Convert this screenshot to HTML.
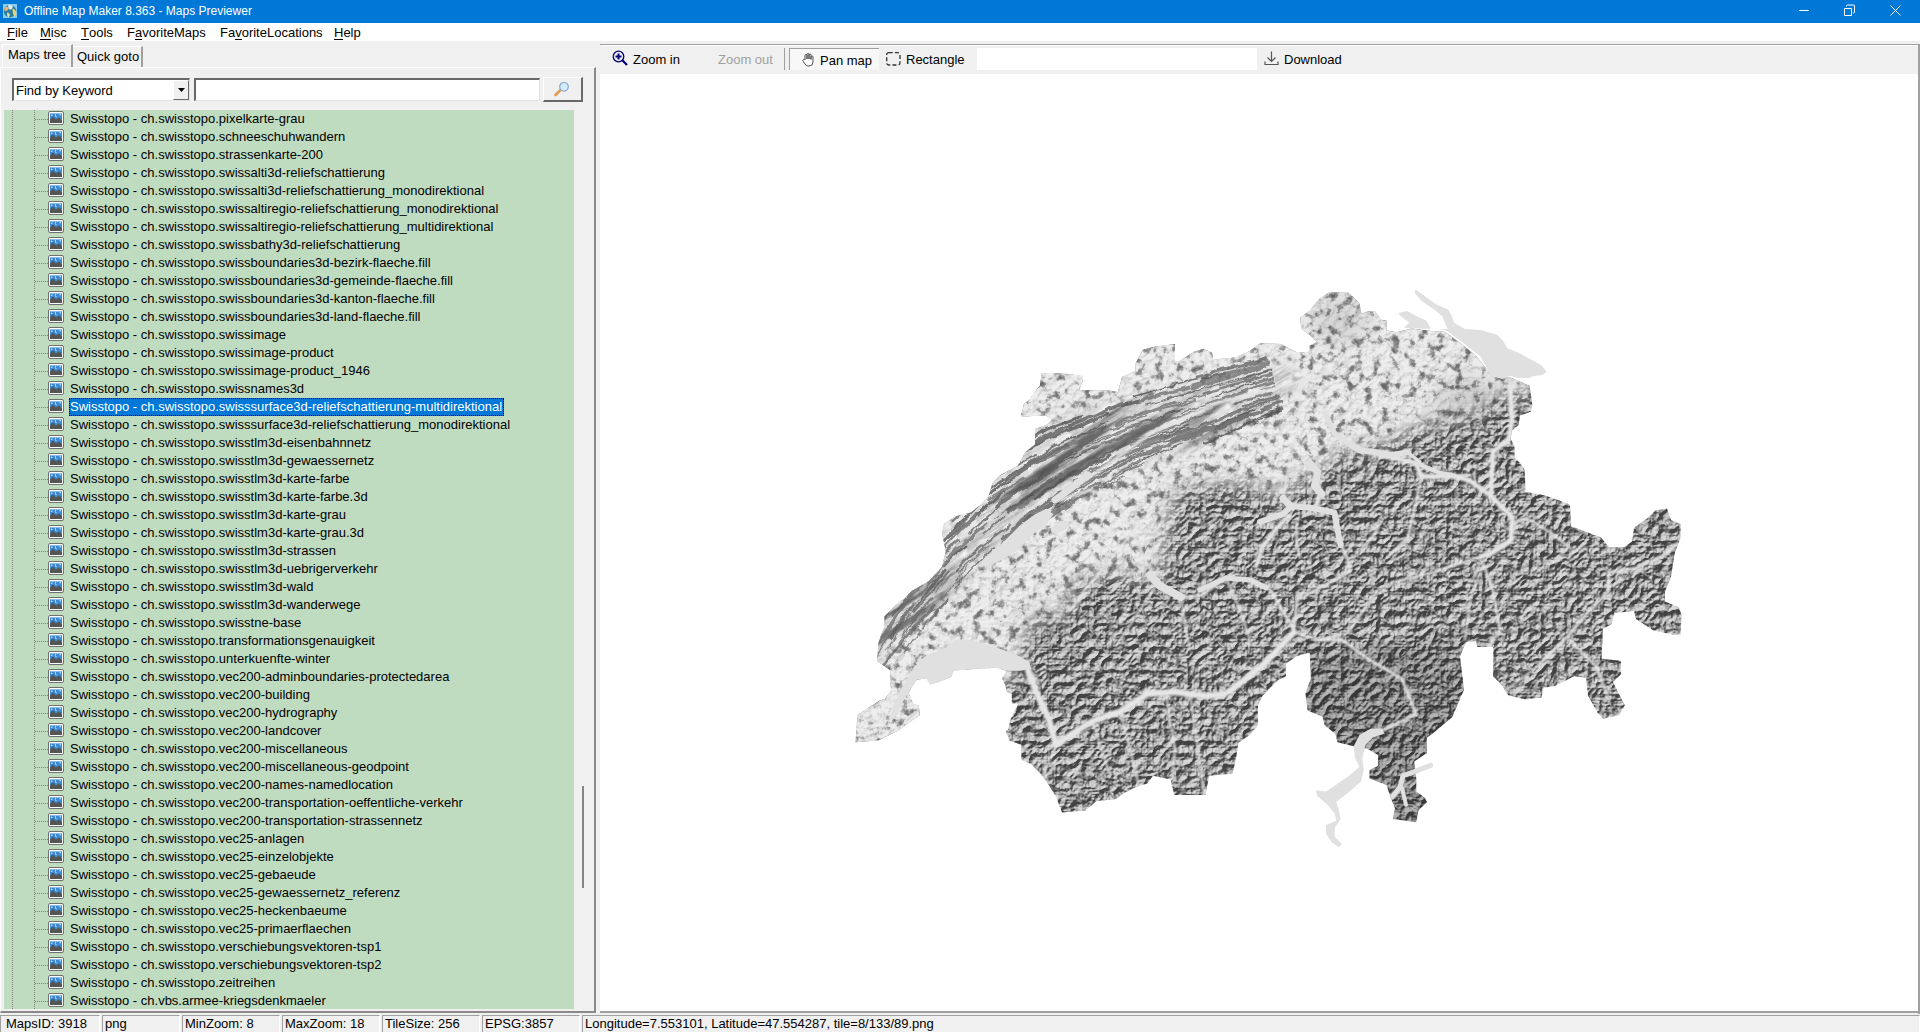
<!DOCTYPE html>
<html><head><meta charset="utf-8">
<style>
*{box-sizing:border-box}
html,body{margin:0;padding:0}
body{width:1920px;height:1032px;overflow:hidden;position:relative;background:#f0f0f0;font-family:"Liberation Sans",sans-serif;font-size:13px;color:#000}
.a{position:absolute}
#title{left:0;top:0;width:1920px;height:23px;background:#0078d7;color:#fff;font-size:12px;line-height:23px}
#title .t{left:24px;top:0}
#menu{left:0;top:23px;width:1920px;height:18px;background:#fff;line-height:20px}
#menu span{position:absolute;top:0}
u{text-decoration:none;border-bottom:1px solid #000;display:inline-block;line-height:12px}
.tab{position:absolute;line-height:18px}
#tree{left:4px;top:110px;width:570px;height:899px;background:#c0dcc0;overflow:hidden}
.r{position:absolute;left:0;width:570px;height:18px;line-height:18px;white-space:nowrap}
.hl{position:absolute;left:31px;top:9px;width:13px;height:1px;background:repeating-linear-gradient(90deg,#808080 0 1px,transparent 1px 2px)}
.r span{position:absolute;left:65px;top:0;padding:0 2px 0 1px}
.r.sel span{background:#0078d7;color:#fff;outline:1px dotted #000;outline-offset:-1px}
.ic{position:absolute;left:44px;top:1px;width:16px;height:14px}
#status span{position:absolute;top:0}
.sp{position:absolute;top:1015px;height:17px;border-top:1px solid #a0a0a0;border-left:1px solid #a0a0a0;border-right:1px solid #fff;line-height:15px;padding-left:5px;white-space:nowrap}
</style></head><body>
<div id="title" class="a">
  <svg class="a" style="left:3px;top:4px" width="14" height="14" viewBox="0 0 14 14"><rect width="14" height="14" fill="#86cdf2"/><circle cx="7" cy="7.2" r="6.2" fill="#2e7fa6"/><path d="M5 0.8Q8 0.5 10 2L9 5Q7 6 5.5 4.5Z" fill="#d8ecf0"/><path d="M1.2 4Q3 2 5 3L5.5 5.5Q4 7 1.5 7Z" fill="#e8b46c"/><path d="M9.5 4.5Q12.5 5 13.2 8L12.5 12Q11 13 10.5 11L9.8 8Z" fill="#f2d46a"/><path d="M4 8.5Q6.5 8.5 6.8 11L5.8 13.5Q4.5 13 4.2 11Z" fill="#e6e89a"/></svg>
  <span class="a t">Offline Map Maker 8.363 - Maps Previewer</span>
  <svg class="a" style="left:1799px;top:10px" width="11" height="2"><rect width="10" height="1" fill="#fff"/></svg>
  <svg class="a" style="left:1843px;top:4px" width="13" height="13" viewBox="0 0 13 13"><path d="M1.5 4.5h7v7h-7z" fill="none" stroke="#fff" stroke-width="1"/><path d="M3.5 2.5v-0.5a1 1 0 0 1 1-1h6a1 1 0 0 1 1 1v6a1 1 0 0 1-1 1h-0.5" fill="none" stroke="#fff" stroke-width="1"/></svg>
  <svg class="a" style="left:1889px;top:4px" width="13" height="13" viewBox="0 0 13 13"><path d="M1.5 1.5L11.5 11.5M11.5 1.5L1.5 11.5" stroke="#fff" stroke-width="1"/></svg>
</div>
<div id="menu" class="a">
  <span style="left:7px"><u>F</u>ile</span>
  <span style="left:40px"><u>M</u>isc</span>
  <span style="left:81px"><u>T</u>ools</span>
  <span style="left:127px">F<u>a</u>voriteMaps</span>
  <span style="left:220px">Fa<u>v</u>oriteLocations</span>
  <span style="left:334px"><u>H</u>elp</span>
</div>
<!-- left panel -->
<div class="a" style="left:0;top:42px;width:598px;height:973px;background:#f0f0f0"></div>
<!-- tabs -->
<div class="a" style="left:2px;top:44px;width:71px;height:24px;background:#f0f0f0;border-top:1px solid #fff;border-left:1px solid #fff;border-right:2px solid #a0a0a0"></div>
<div class="a tab" style="left:8px;top:46px">Maps tree</div>
<div class="a" style="left:73px;top:46px;width:70px;height:21px;border-top:1px solid #fff;border-right:2px solid #a0a0a0"></div>
<div class="a tab" style="left:77px;top:48px">Quick goto</div>
<!-- tab page border -->
<div class="a" style="left:0;top:67px;width:596px;height:946px;border-top:1px solid #fff;border-left:1px solid #fff;border-right:2px solid #8a8a8a;border-bottom:2px solid #8a8a8a"></div>
<div class="a" style="left:73px;top:67px;width:522px;height:1px;background:#fff"></div>
<!-- combo -->
<div class="a" style="left:12px;top:78px;width:178px;height:23px;background:#fff;border-top:2px solid #696969;border-left:2px solid #696969;border-bottom:1px solid #e3e3e3;border-right:1px solid #e3e3e3;line-height:21px;padding-left:2px">Find by Keyword</div>
<div class="a" style="left:173px;top:80px;width:16px;height:20px;background:#f0f0f0;border-right:1px solid #696969;border-bottom:1px solid #696969;border-top:1px solid #fff;border-left:1px solid #fff"></div>
<svg class="a" style="left:178px;top:88px" width="8" height="5"><path d="M0 0h7L3.5 4z" fill="#000"/></svg>
<div class="a" style="left:194px;top:78px;width:346px;height:23px;background:#fff;border-top:2px solid #696969;border-left:2px solid #696969;border-bottom:1px solid #e3e3e3;border-right:1px solid #e3e3e3"></div>
<div class="a" style="left:543px;top:77px;width:40px;height:25px;background:#f0f0f0;border-top:1px solid #fff;border-left:1px solid #fff;border-right:2px solid #696969;border-bottom:2px solid #696969"></div>
<svg class="a" style="left:553px;top:81px" width="18" height="17" viewBox="0 0 18 17"><line x1="2.5" y1="14" x2="7" y2="9.5" stroke="#e39a55" stroke-width="2.6" stroke-linecap="round"/><circle cx="11" cy="5.8" r="4.3" fill="#d2ecfa" stroke="#86a6d0" stroke-width="1.2"/></svg>
<!-- tree -->
<svg width="0" height="0" style="position:absolute"><defs><symbol id="icn" viewBox="0 0 16 14"><rect x="0.5" y="0.5" width="15" height="13" rx="1.5" fill="#fff" stroke="#707070"/><rect x="2" y="2" width="12" height="10" fill="#3a8ad6"/><path d="M2 12V8.5L5 5.5L8 8.5L11 6.5L14 9V12Z" fill="#555"/><circle cx="3.7" cy="4.3" r="0.8" fill="#cfe8ff"/><path d="M8.6 2.8a1.6 1.6 0 1 0 0.9 2.9a1.3 1.3 0 1 1 -0.9 -2.9z" fill="#e8f4ff"/><circle cx="12.3" cy="3.8" r="0.8" fill="#cfe8ff"/><rect x="2" y="2" width="12" height="0.6" fill="#bcdcf6"/></symbol></defs></svg>
<div id="tree" class="a">
<div style="position:absolute;left:8px;top:0;width:1px;height:899px;background:repeating-linear-gradient(#808080 0 1px,transparent 1px 2px)"></div>
<div style="position:absolute;left:30px;top:0;width:1px;height:899px;background:repeating-linear-gradient(#808080 0 1px,transparent 1px 2px)"></div>
<div class="r" style="top:0px"><i class="hl"></i><svg class="ic" width="16" height="14"><use href="#icn"/></svg><span>Swisstopo - ch.swisstopo.pixelkarte-grau</span></div>
<div class="r" style="top:18px"><i class="hl"></i><svg class="ic" width="16" height="14"><use href="#icn"/></svg><span>Swisstopo - ch.swisstopo.schneeschuhwandern</span></div>
<div class="r" style="top:36px"><i class="hl"></i><svg class="ic" width="16" height="14"><use href="#icn"/></svg><span>Swisstopo - ch.swisstopo.strassenkarte-200</span></div>
<div class="r" style="top:54px"><i class="hl"></i><svg class="ic" width="16" height="14"><use href="#icn"/></svg><span>Swisstopo - ch.swisstopo.swissalti3d-reliefschattierung</span></div>
<div class="r" style="top:72px"><i class="hl"></i><svg class="ic" width="16" height="14"><use href="#icn"/></svg><span>Swisstopo - ch.swisstopo.swissalti3d-reliefschattierung_monodirektional</span></div>
<div class="r" style="top:90px"><i class="hl"></i><svg class="ic" width="16" height="14"><use href="#icn"/></svg><span>Swisstopo - ch.swisstopo.swissaltiregio-reliefschattierung_monodirektional</span></div>
<div class="r" style="top:108px"><i class="hl"></i><svg class="ic" width="16" height="14"><use href="#icn"/></svg><span>Swisstopo - ch.swisstopo.swissaltiregio-reliefschattierung_multidirektional</span></div>
<div class="r" style="top:126px"><i class="hl"></i><svg class="ic" width="16" height="14"><use href="#icn"/></svg><span>Swisstopo - ch.swisstopo.swissbathy3d-reliefschattierung</span></div>
<div class="r" style="top:144px"><i class="hl"></i><svg class="ic" width="16" height="14"><use href="#icn"/></svg><span>Swisstopo - ch.swisstopo.swissboundaries3d-bezirk-flaeche.fill</span></div>
<div class="r" style="top:162px"><i class="hl"></i><svg class="ic" width="16" height="14"><use href="#icn"/></svg><span>Swisstopo - ch.swisstopo.swissboundaries3d-gemeinde-flaeche.fill</span></div>
<div class="r" style="top:180px"><i class="hl"></i><svg class="ic" width="16" height="14"><use href="#icn"/></svg><span>Swisstopo - ch.swisstopo.swissboundaries3d-kanton-flaeche.fill</span></div>
<div class="r" style="top:198px"><i class="hl"></i><svg class="ic" width="16" height="14"><use href="#icn"/></svg><span>Swisstopo - ch.swisstopo.swissboundaries3d-land-flaeche.fill</span></div>
<div class="r" style="top:216px"><i class="hl"></i><svg class="ic" width="16" height="14"><use href="#icn"/></svg><span>Swisstopo - ch.swisstopo.swissimage</span></div>
<div class="r" style="top:234px"><i class="hl"></i><svg class="ic" width="16" height="14"><use href="#icn"/></svg><span>Swisstopo - ch.swisstopo.swissimage-product</span></div>
<div class="r" style="top:252px"><i class="hl"></i><svg class="ic" width="16" height="14"><use href="#icn"/></svg><span>Swisstopo - ch.swisstopo.swissimage-product_1946</span></div>
<div class="r" style="top:270px"><i class="hl"></i><svg class="ic" width="16" height="14"><use href="#icn"/></svg><span>Swisstopo - ch.swisstopo.swissnames3d</span></div>
<div class="r sel" style="top:288px"><i class="hl"></i><svg class="ic" width="16" height="14"><use href="#icn"/></svg><span>Swisstopo - ch.swisstopo.swisssurface3d-reliefschattierung-multidirektional</span></div>
<div class="r" style="top:306px"><i class="hl"></i><svg class="ic" width="16" height="14"><use href="#icn"/></svg><span>Swisstopo - ch.swisstopo.swisssurface3d-reliefschattierung_monodirektional</span></div>
<div class="r" style="top:324px"><i class="hl"></i><svg class="ic" width="16" height="14"><use href="#icn"/></svg><span>Swisstopo - ch.swisstopo.swisstlm3d-eisenbahnnetz</span></div>
<div class="r" style="top:342px"><i class="hl"></i><svg class="ic" width="16" height="14"><use href="#icn"/></svg><span>Swisstopo - ch.swisstopo.swisstlm3d-gewaessernetz</span></div>
<div class="r" style="top:360px"><i class="hl"></i><svg class="ic" width="16" height="14"><use href="#icn"/></svg><span>Swisstopo - ch.swisstopo.swisstlm3d-karte-farbe</span></div>
<div class="r" style="top:378px"><i class="hl"></i><svg class="ic" width="16" height="14"><use href="#icn"/></svg><span>Swisstopo - ch.swisstopo.swisstlm3d-karte-farbe.3d</span></div>
<div class="r" style="top:396px"><i class="hl"></i><svg class="ic" width="16" height="14"><use href="#icn"/></svg><span>Swisstopo - ch.swisstopo.swisstlm3d-karte-grau</span></div>
<div class="r" style="top:414px"><i class="hl"></i><svg class="ic" width="16" height="14"><use href="#icn"/></svg><span>Swisstopo - ch.swisstopo.swisstlm3d-karte-grau.3d</span></div>
<div class="r" style="top:432px"><i class="hl"></i><svg class="ic" width="16" height="14"><use href="#icn"/></svg><span>Swisstopo - ch.swisstopo.swisstlm3d-strassen</span></div>
<div class="r" style="top:450px"><i class="hl"></i><svg class="ic" width="16" height="14"><use href="#icn"/></svg><span>Swisstopo - ch.swisstopo.swisstlm3d-uebrigerverkehr</span></div>
<div class="r" style="top:468px"><i class="hl"></i><svg class="ic" width="16" height="14"><use href="#icn"/></svg><span>Swisstopo - ch.swisstopo.swisstlm3d-wald</span></div>
<div class="r" style="top:486px"><i class="hl"></i><svg class="ic" width="16" height="14"><use href="#icn"/></svg><span>Swisstopo - ch.swisstopo.swisstlm3d-wanderwege</span></div>
<div class="r" style="top:504px"><i class="hl"></i><svg class="ic" width="16" height="14"><use href="#icn"/></svg><span>Swisstopo - ch.swisstopo.swisstne-base</span></div>
<div class="r" style="top:522px"><i class="hl"></i><svg class="ic" width="16" height="14"><use href="#icn"/></svg><span>Swisstopo - ch.swisstopo.transformationsgenauigkeit</span></div>
<div class="r" style="top:540px"><i class="hl"></i><svg class="ic" width="16" height="14"><use href="#icn"/></svg><span>Swisstopo - ch.swisstopo.unterkuenfte-winter</span></div>
<div class="r" style="top:558px"><i class="hl"></i><svg class="ic" width="16" height="14"><use href="#icn"/></svg><span>Swisstopo - ch.swisstopo.vec200-adminboundaries-protectedarea</span></div>
<div class="r" style="top:576px"><i class="hl"></i><svg class="ic" width="16" height="14"><use href="#icn"/></svg><span>Swisstopo - ch.swisstopo.vec200-building</span></div>
<div class="r" style="top:594px"><i class="hl"></i><svg class="ic" width="16" height="14"><use href="#icn"/></svg><span>Swisstopo - ch.swisstopo.vec200-hydrography</span></div>
<div class="r" style="top:612px"><i class="hl"></i><svg class="ic" width="16" height="14"><use href="#icn"/></svg><span>Swisstopo - ch.swisstopo.vec200-landcover</span></div>
<div class="r" style="top:630px"><i class="hl"></i><svg class="ic" width="16" height="14"><use href="#icn"/></svg><span>Swisstopo - ch.swisstopo.vec200-miscellaneous</span></div>
<div class="r" style="top:648px"><i class="hl"></i><svg class="ic" width="16" height="14"><use href="#icn"/></svg><span>Swisstopo - ch.swisstopo.vec200-miscellaneous-geodpoint</span></div>
<div class="r" style="top:666px"><i class="hl"></i><svg class="ic" width="16" height="14"><use href="#icn"/></svg><span>Swisstopo - ch.swisstopo.vec200-names-namedlocation</span></div>
<div class="r" style="top:684px"><i class="hl"></i><svg class="ic" width="16" height="14"><use href="#icn"/></svg><span>Swisstopo - ch.swisstopo.vec200-transportation-oeffentliche-verkehr</span></div>
<div class="r" style="top:702px"><i class="hl"></i><svg class="ic" width="16" height="14"><use href="#icn"/></svg><span>Swisstopo - ch.swisstopo.vec200-transportation-strassennetz</span></div>
<div class="r" style="top:720px"><i class="hl"></i><svg class="ic" width="16" height="14"><use href="#icn"/></svg><span>Swisstopo - ch.swisstopo.vec25-anlagen</span></div>
<div class="r" style="top:738px"><i class="hl"></i><svg class="ic" width="16" height="14"><use href="#icn"/></svg><span>Swisstopo - ch.swisstopo.vec25-einzelobjekte</span></div>
<div class="r" style="top:756px"><i class="hl"></i><svg class="ic" width="16" height="14"><use href="#icn"/></svg><span>Swisstopo - ch.swisstopo.vec25-gebaeude</span></div>
<div class="r" style="top:774px"><i class="hl"></i><svg class="ic" width="16" height="14"><use href="#icn"/></svg><span>Swisstopo - ch.swisstopo.vec25-gewaessernetz_referenz</span></div>
<div class="r" style="top:792px"><i class="hl"></i><svg class="ic" width="16" height="14"><use href="#icn"/></svg><span>Swisstopo - ch.swisstopo.vec25-heckenbaeume</span></div>
<div class="r" style="top:810px"><i class="hl"></i><svg class="ic" width="16" height="14"><use href="#icn"/></svg><span>Swisstopo - ch.swisstopo.vec25-primaerflaechen</span></div>
<div class="r" style="top:828px"><i class="hl"></i><svg class="ic" width="16" height="14"><use href="#icn"/></svg><span>Swisstopo - ch.swisstopo.verschiebungsvektoren-tsp1</span></div>
<div class="r" style="top:846px"><i class="hl"></i><svg class="ic" width="16" height="14"><use href="#icn"/></svg><span>Swisstopo - ch.swisstopo.verschiebungsvektoren-tsp2</span></div>
<div class="r" style="top:864px"><i class="hl"></i><svg class="ic" width="16" height="14"><use href="#icn"/></svg><span>Swisstopo - ch.swisstopo.zeitreihen</span></div>
<div class="r" style="top:882px"><i class="hl"></i><svg class="ic" width="16" height="14"><use href="#icn"/></svg><span>Swisstopo - ch.vbs.armee-kriegsdenkmaeler</span></div>
</div>
<!-- scrollbar thumb -->
<div class="a" style="left:582px;top:786px;width:2px;height:102px;background:#858585"></div>

<!-- right panel -->
<div class="a" style="left:600px;top:42px;width:1320px;height:973px;background:#f0f0f0"></div>
<div class="a" style="left:600px;top:44px;width:1320px;height:30px;background:#f0f0f0;border-top:1px solid #a0a0a0"></div>
<div class="a" style="left:601px;top:45px;width:1318px;height:1px;background:#fff"></div>
<div class="a" style="left:1918px;top:44px;width:2px;height:970px;background:#a0a0a0"></div>
<!-- canvas -->
<div class="a" style="left:600px;top:74px;width:1318px;height:939px;background:#fff;overflow:hidden">
<svg width="1318" height="939" viewBox="600 74 1318 939" style="position:absolute;left:0;top:0">
<defs>
<clipPath id="ch"><path d="M855.5 742.2 L857.4 715.0 L880.7 700.0 L885.0 699.0 L891.0 690.0 L890.0 670.0 L877.0 661.0 L878.8 641.4 L884.6 626.0 L884.6 616.2 L894.3 606.5 L904.0 598.8 L911.7 591.0 L929.0 581.0 L942.0 567.0 L945.9 551.2 L942.0 533.7 L944.0 524.0 L955.6 516.3 L971.0 512.4 L980.8 504.7 L988.5 497.0 L992.4 483.3 L1000.0 475.6 L1017.6 466.0 L1025.3 452.3 L1035.0 444.6 L1035.0 429.0 L1046.5 425.0 L1052.0 420.0 L1046.7 415.5 L1022.4 416.5 L1021.0 415.7 L1024.0 404.0 L1029.0 400.0 L1034.0 393.0 L1040.0 385.6 L1041.7 373.0 L1052.0 373.0 L1069.0 374.0 L1083.0 376.0 L1083.0 380.0 L1079.0 390.5 L1099.0 390.0 L1108.5 390.5 L1118.0 392.0 L1122.0 377.0 L1135.7 371.0 L1135.7 363.0 L1143.0 349.8 L1153.0 347.0 L1175.0 344.0 L1175.0 361.0 L1180.0 361.0 L1193.8 351.7 L1203.5 348.8 L1212.0 352.7 L1213.0 359.5 L1236.0 357.5 L1250.0 350.7 L1260.7 343.0 L1281.0 344.0 L1297.4 352.7 L1309.0 351.7 L1309.0 346.0 L1316.8 342.0 L1311.0 336.0 L1301.3 328.4 L1300.3 317.8 L1311.0 309.0 L1318.8 299.4 L1328.4 292.6 L1347.8 292.6 L1353.6 297.4 L1359.5 303.3 L1361.4 314.0 L1369.0 311.0 L1375.0 311.0 L1380.8 319.7 L1386.6 320.7 L1386.6 330.4 L1396.3 332.3 L1411.8 328.4 L1435.0 331.4 L1444.7 331.4 L1464.0 346.0 L1475.7 355.6 L1493.0 376.9 L1510.6 377.6 L1529.5 385.8 L1531.0 395.3 L1532.3 404.8 L1531.0 411.6 L1520.0 415.6 L1518.7 425.0 L1512.0 430.6 L1510.6 438.7 L1514.6 446.8 L1514.6 457.7 L1520.0 463.1 L1524.6 469.7 L1525.6 492.0 L1532.3 493.0 L1543.0 494.9 L1554.7 498.8 L1570.0 504.6 L1571.0 526.0 L1585.7 531.7 L1601.0 537.5 L1609.0 547.2 L1624.4 547.2 L1632.0 541.4 L1634.0 527.8 L1647.7 518.0 L1655.4 510.4 L1667.0 508.4 L1671.0 520.0 L1680.6 524.0 L1680.6 537.5 L1674.8 553.0 L1671.0 576.3 L1665.0 591.8 L1665.0 601.5 L1678.7 607.3 L1681.6 615.0 L1680.6 634.4 L1672.9 634.4 L1653.5 630.5 L1636.0 619.0 L1634.0 611.0 L1614.7 613.0 L1611.0 624.7 L1603.0 628.6 L1601.6 658.8 L1621.0 660.7 L1621.0 674.3 L1613.0 682.0 L1624.8 705.3 L1619.0 715.0 L1603.5 718.8 L1597.7 713.0 L1588.0 695.6 L1586.0 678.0 L1574.4 676.2 L1570.5 678.0 L1555.0 686.0 L1543.4 687.8 L1541.5 697.5 L1526.0 699.5 L1508.5 695.6 L1500.8 684.0 L1493.0 676.2 L1493.0 647.0 L1477.5 647.0 L1475.6 641.3 L1466.0 642.3 L1460.0 656.8 L1462.0 672.3 L1464.0 689.8 L1452.3 717.0 L1437.6 729.6 L1427.0 738.0 L1427.0 753.0 L1414.2 761.5 L1416.3 778.6 L1416.3 791.4 L1424.8 797.8 L1427.0 802.0 L1418.4 810.6 L1416.3 822.3 L1392.9 819.0 L1395.0 808.4 L1390.7 797.8 L1386.5 785.0 L1369.4 778.6 L1369.4 770.0 L1378.0 765.8 L1378.0 755.0 L1367.3 748.7 L1354.5 746.6 L1337.4 742.3 L1335.3 733.8 L1324.6 725.3 L1322.5 716.8 L1307.6 710.4 L1305.4 693.3 L1310.8 678.4 L1309.7 652.8 L1297.0 656.0 L1286.0 663.5 L1286.0 676.2 L1277.7 680.5 L1269.0 689.0 L1262.8 695.4 L1258.0 705.0 L1258.0 725.0 L1250.0 735.0 L1238.4 742.7 L1236.4 756.3 L1232.6 773.7 L1209.3 775.7 L1205.4 795.0 L1174.4 795.0 L1170.5 779.5 L1153.0 775.7 L1147.3 783.4 L1135.7 787.3 L1124.0 793.0 L1116.3 799.0 L1097.0 800.9 L1085.3 810.5 L1062.0 812.5 L1056.2 797.0 L1046.5 781.5 L1040.7 773.7 L1031.0 764.0 L1021.3 760.0 L1021.3 744.7 L1009.7 740.8 L1005.8 731.0 L1007.9 730.0 L1010.8 719.1 L1013.7 712.4 L1018.6 703.6 L1011.8 703.6 L1011.8 694.0 L1007.0 692.0 L1005.0 684.3 L1002.0 678.4 L1007.0 670.7 L996.3 667.8 L976.9 668.8 L962.4 669.7 L952.7 670.7 L951.7 676.5 L938.1 682.3 L930.4 684.3 L926.5 678.4 L916.8 679.4 L911.0 688.1 L909.0 694.0 L913.0 703.6 L918.8 705.6 L919.7 715.3 L914.0 719.1 L904.2 726.0 L899.4 730.0 L878.8 740.2Z"/></clipPath>
<filter id="bl" x="-20%" y="-20%" width="140%" height="140%"><feGaussianBlur stdDeviation="10"/></filter>
<filter id="bl2" x="-20%" y="-20%" width="140%" height="140%"><feGaussianBlur stdDeviation="6"/></filter>
<filter id="vb" x="-5%" y="-5%" width="110%" height="110%"><feGaussianBlur stdDeviation="0.9"/></filter>
<mask id="mN" maskUnits="userSpaceOnUse" x="840" y="280" width="860" height="580"><path d="M1026.0 644.0 L1031.0 616.0 L1064.0 619.0 L1070.0 587.0 L1112.0 570.0 L1138.0 579.0 L1160.0 579.0 L1165.0 540.0 L1175.0 490.0 L1240.0 482.0 L1280.0 498.0 L1320.0 470.0 L1340.0 455.0 L1390.0 442.0 L1420.0 428.0 L1460.0 420.0 L1500.0 400.0 L1545.0 385.0 L1560.0 250.0 L800.0 250.0 L800.0 760.0 L900.0 760.0 L1000.0 690.0Z" fill="#fff" filter="url(#bl)"/></mask>
<mask id="mJ" maskUnits="userSpaceOnUse" x="840" y="280" width="860" height="580"><path d="M876.0 665.0 L895.0 640.0 L925.0 615.0 L955.0 585.0 L980.0 560.0 L1010.0 540.0 L1040.0 512.0 L1066.0 492.0 L1100.0 478.0 L1140.0 462.0 L1190.0 445.0 L1230.0 425.0 L1270.0 405.0 L1300.0 385.0 L1290.0 360.0 L1200.0 388.0 L1100.0 405.0 L1040.0 430.0 L1000.0 440.0 L950.0 480.0 L900.0 540.0 L860.0 600.0 L840.0 680.0Z" fill="#fff" filter="url(#bl2)"/></mask>
<filter id="alps" filterUnits="userSpaceOnUse" x="840" y="280" width="860" height="580" color-interpolation-filters="sRGB">
<feTurbulence type="turbulence" baseFrequency="0.085" numOctaves="5" seed="11" result="n"/>
<feColorMatrix in="n" type="matrix" values="0 0 0 0 0  0 0 0 0 0  0 0 0 0 0  -1 0 0 0 1" result="h"/>
<feDiffuseLighting in="h" surfaceScale="5" diffuseConstant="1.0" lighting-color="#ffffff" result="l"><feDistantLight azimuth="235" elevation="35"/></feDiffuseLighting>
<feComponentTransfer in="l" result="l2"><feFuncR type="linear" slope="0.65" intercept="0.28"/><feFuncG type="linear" slope="0.65" intercept="0.28"/><feFuncB type="linear" slope="0.65" intercept="0.28"/></feComponentTransfer>
<feBlend in="SourceGraphic" in2="l2" mode="multiply"/>
</filter>
<filter id="plat" filterUnits="userSpaceOnUse" x="840" y="280" width="860" height="580" color-interpolation-filters="sRGB">
<feTurbulence type="fractalNoise" baseFrequency="0.11" numOctaves="4" seed="5" result="n"/>
<feColorMatrix in="n" type="matrix" values="1 0 0 0 0  1 0 0 0 0  1 0 0 0 0  0 0 0 0 1" result="r"/>
<feComponentTransfer in="r" result="b"><feFuncR type="table" tableValues="1 1 1 1 1 0.95 0.68 0.5 0.45 0.42"/><feFuncG type="table" tableValues="1 1 1 1 1 0.95 0.68 0.5 0.45 0.42"/><feFuncB type="table" tableValues="1 1 1 1 1 0.95 0.68 0.5 0.45 0.42"/></feComponentTransfer>
<feTurbulence type="turbulence" baseFrequency="0.09" numOctaves="3" seed="21" result="n2"/>
<feColorMatrix in="n2" type="matrix" values="0 0 0 0 0  0 0 0 0 0  0 0 0 0 0  -1 0 0 0 1" result="h2"/>
<feDiffuseLighting in="h2" surfaceScale="2" diffuseConstant="1.0" lighting-color="#ffffff" result="l"><feDistantLight azimuth="235" elevation="50"/></feDiffuseLighting>
<feComponentTransfer in="l" result="l2"><feFuncR type="linear" slope="0.3" intercept="0.76"/><feFuncG type="linear" slope="0.3" intercept="0.76"/><feFuncB type="linear" slope="0.3" intercept="0.76"/></feComponentTransfer>
<feBlend in="b" in2="l2" mode="multiply" result="t"/>
<feBlend in="SourceGraphic" in2="t" mode="multiply"/>
</filter>
<filter id="jura" filterUnits="userSpaceOnUse" x="700" y="100" width="1100" height="900" color-interpolation-filters="sRGB">
<feTurbulence type="fractalNoise" baseFrequency="0.006 0.075" numOctaves="5" seed="8" result="n"/>
<feColorMatrix in="n" type="matrix" values="1 0 0 0 0  1 0 0 0 0  1 0 0 0 0  0 0 0 0 1" result="r"/>
<feComponentTransfer in="r" result="b"><feFuncR type="table" tableValues="1 1 1 1 0.9 0.5 0.42 0.4"/><feFuncG type="table" tableValues="1 1 1 1 0.9 0.5 0.42 0.4"/><feFuncB type="table" tableValues="1 1 1 1 0.9 0.5 0.42 0.4"/></feComponentTransfer>
<feTurbulence type="turbulence" baseFrequency="0.02 0.12" numOctaves="3" seed="4" result="n2"/>
<feColorMatrix in="n2" type="matrix" values="0 0 0 0 0  0 0 0 0 0  0 0 0 0 0  -1 0 0 0 1" result="h2"/>
<feDiffuseLighting in="h2" surfaceScale="4" diffuseConstant="1.0" lighting-color="#ffffff" result="l"><feDistantLight azimuth="180" elevation="45"/></feDiffuseLighting>
<feComponentTransfer in="l" result="l2"><feFuncR type="linear" slope="0.45" intercept="0.62"/><feFuncG type="linear" slope="0.45" intercept="0.62"/><feFuncB type="linear" slope="0.45" intercept="0.62"/></feComponentTransfer>
<feBlend in="b" in2="l2" mode="multiply" result="t"/>
<feBlend in="SourceGraphic" in2="t" mode="multiply"/>
</filter>
<filter id="rough" filterUnits="userSpaceOnUse" x="840" y="280" width="860" height="580"><feTurbulence type="fractalNoise" baseFrequency="0.08" numOctaves="3" seed="9" result="t"/><feDisplacementMap in="SourceGraphic" in2="t" scale="6" xChannelSelector="R" yChannelSelector="G"/></filter>
</defs>
<g clip-path="url(#ch)">
<g filter="url(#alps)"><rect x="840" y="280" width="860" height="580" fill="rgb(238,238,238)"/><g filter="url(#bl)"><path d="M1300.0 650.0 L1460.0 640.0 L1480.0 700.0 L1440.0 840.0 L1380.0 840.0 L1300.0 730.0Z" fill="rgb(200,200,200)"/><ellipse cx="1045" cy="628" rx="18" ry="16" fill="rgb(215,215,215)"/><ellipse cx="1490" cy="440" rx="30" ry="20" fill="rgb(235,235,235)"/></g></g>
<g mask="url(#mN)"><g filter="url(#plat)"><rect x="840" y="280" width="860" height="580" fill="rgb(238,238,238)"/><g filter="url(#bl)"><ellipse cx="1340" cy="320" rx="30" ry="25" fill="rgb(215,215,215)"/><ellipse cx="1470" cy="400" rx="40" ry="25" fill="rgb(215,215,215)"/></g></g></g>
<g mask="url(#mJ)"><g transform="rotate(-32 1100 480)"><rect x="700" y="100" width="1100" height="900" fill="rgb(248,248,248)" filter="url(#jura)"/></g></g>
<g fill="none" stroke-linecap="round" filter="url(#rough)" opacity="0.75">
<path d="M1088.3 430.1 L1095.1 427.2 L1102.0 424.4 L1108.9 421.7" stroke="#4e4e4e" stroke-width="1.5"/>
<path d="M1059.6 429.0 L1066.6 425.9 L1073.5 422.7 L1080.4 419.6" stroke="#6c6c6c" stroke-width="1.5"/>
<path d="M944.3 597.5 L949.3 591.1 L954.2 584.6 L959.0 578.0 L963.7 571.4 L965.9 567.9 L971.4 561.9 L977.1 556.1 L983.0 550.4 L988.9 544.9" stroke="#626262" stroke-width="1.0"/>
<path d="M959.8 571.0 L963.9 566.4 L971.2 559.8 L978.4 553.0 L985.4 546.1" stroke="#626262" stroke-width="1.2"/>
<path d="M1086.8 473.2 L1094.3 469.3 L1101.7 465.3 L1109.1 461.1 L1116.4 456.9 L1123.7 452.6 L1131.1 448.4 L1137.1 445.3 L1145.0 442.3 L1152.9 439.5 L1160.9 436.9 L1169.0 434.5" stroke="#626262" stroke-width="2.2"/>
<path d="M1196.4 434.5 L1204.3 431.6 L1212.6 428.6 L1220.6 425.9 L1228.5 423.3 L1236.6 420.7 L1244.6 418.2 L1252.6 415.6 L1260.6 413.0 L1268.5 410.2" stroke="#585858" stroke-width="2.3"/>
<path d="M1168.6 444.9 L1176.6 442.4 L1184.5 439.8 L1192.5 437.2 L1200.4 434.6 L1208.7 431.7 L1216.6 428.8 L1224.4 425.9 L1232.2 422.9 L1240.0 419.8 L1247.7 416.6 L1255.5 413.5 L1263.3 410.4 L1271.0 407.3" stroke="#626262" stroke-width="2.9"/>
<path d="M912.7 610.4 L917.9 603.5 L923.1 596.5 L928.4 589.6 L933.9 582.9 L939.5 576.3 L945.3 569.9" stroke="#585858" stroke-width="2.5"/>
<path d="M1045.5 470.5 L1052.4 465.6 L1059.5 460.6 L1066.9 456.5 L1074.3 452.5 L1081.8 448.6" stroke="#585858" stroke-width="1.6"/>
<path d="M1125.8 456.0 L1133.6 452.3 L1139.6 449.7 L1147.8 446.8 L1156.0 443.9 L1164.3 441.0 L1172.5 438.2 L1180.7 435.3 L1189.0 432.5 L1197.2 429.7 L1205.7 426.7 L1213.9 423.7" stroke="#626262" stroke-width="1.5"/>
<path d="M877.6 645.4 L882.2 638.2 L886.7 631.1 L891.4 623.9 L896.1 616.8 L900.8 609.7 L905.1 603.5 L910.9 597.2 L916.6 590.8 L922.3 584.5 L928.0 578.2 L933.7 571.8 L939.3 565.4" stroke="#6c6c6c" stroke-width="2.6"/>
<path d="M912.4 619.7 L917.2 613.1 L920.8 609.7 L926.6 603.9 L932.4 598.2" stroke="#6c6c6c" stroke-width="2.2"/>
<path d="M950.0 498.1 L957.0 493.2 L964.0 488.4 L970.9 483.5 L977.7 478.4 L989.1 471.2 L996.5 467.1 L1003.8 462.9 L1011.0 458.5 L1018.1 453.9 L1025.2 449.3 L1032.3 444.7 L1039.4 440.2 L1050.4 434.2" stroke="#585858" stroke-width="2.1"/>
<path d="M1087.6 444.1 L1095.3 441.1 L1103.0 438.0 L1110.7 434.9 L1118.4 431.7 L1126.0 428.5 L1134.4 425.6 L1142.3 423.1 L1150.2 420.5 L1158.0 417.9 L1165.9 415.2 L1173.8 412.5" stroke="#626262" stroke-width="1.1"/>
<path d="M1251.3 362.2 L1259.1 359.9 L1266.0 358.0 L1266.0 358.1 L1266.1 358.3 L1266.2 358.5 L1266.3 358.9 L1266.4 359.2 L1266.5 359.6 L1266.6 359.8 L1266.7 360.0 L1266.7 360.1 L1266.7 360.1" stroke="#626262" stroke-width="2.6"/>
<path d="M1155.0 409.3 L1163.1 407.0 L1171.2 404.6 L1179.3 402.3 L1187.4 399.9 L1195.5 397.6 L1203.3 395.1" stroke="#626262" stroke-width="1.3"/>
<path d="M1261.0 389.9 L1268.8 387.7 L1275.3 385.9 L1275.4 386.1 L1275.4 386.3 L1275.5 386.4 L1275.5 386.4 L1275.4 386.3 L1275.4 386.1 L1275.3 385.8 L1275.2 385.5 L1275.1 385.2" stroke="#585858" stroke-width="1.2"/>
<path d="M901.5 606.5 L905.5 600.3 L910.4 593.9 L915.3 587.5 L920.2 581.1 L925.2 574.8 L930.3 568.6 L935.5 562.4 L940.8 556.4 L946.3 550.4 L952.2 545.5 L958.5 540.5" stroke="#626262" stroke-width="2.7"/>
<path d="M1018.5 472.4 L1027.2 467.4 L1036.1 462.7 L1045.1 458.2" stroke="#585858" stroke-width="3.2"/>
<path d="M1205.9 380.7 L1213.6 378.4 L1221.4 376.2 L1229.2 373.9 L1237.0 371.7 L1244.8 369.5 L1252.6 367.2 L1260.4 365.0 L1267.7 363.0 L1267.7 363.0 L1267.7 363.0 L1267.7 363.1 L1267.7 363.1 L1267.7 363.1" stroke="#585858" stroke-width="2.1"/>
<path d="M892.4 616.0 L897.3 608.5 L902.2 601.5 L908.6 595.1 L915.0 588.8 L921.6 582.6 L928.1 576.4 L934.5 570.1" stroke="#585858" stroke-width="1.6"/>
<path d="M1242.9 407.0 L1251.2 404.0 L1259.5 401.1 L1267.8 398.2 L1276.1 395.4 L1278.3 394.8 L1278.4 395.1 L1278.4 395.3 L1278.5 395.5 L1278.5 395.6 L1278.6 395.7" stroke="#626262" stroke-width="2.6"/>
<path d="M985.1 468.9 L992.6 465.1 L1000.1 461.4 L1007.5 457.6 L1015.0 453.8 L1022.3 449.9 L1029.7 446.0 L1037.0 442.0 L1044.2 437.9" stroke="#585858" stroke-width="1.5"/>
<path d="M1077.9 472.9 L1084.1 470.0 L1090.3 467.1 L1096.6 464.2" stroke="#626262" stroke-width="1.1"/>
<path d="M886.8 648.4 L891.6 641.6 L896.3 634.8 L901.0 627.9 L905.7 621.1 L910.3 614.2" stroke="#6c6c6c" stroke-width="1.5"/>
<path d="M921.6 562.2 L927.9 555.8 L934.1 549.4 L940.9 542.2 L947.7 536.4 L954.4 530.4 L960.9 524.2 L967.3 518.0" stroke="#6c6c6c" stroke-width="1.2"/>
<path d="M1023.9 502.8 L1031.1 498.2 L1038.3 493.6 L1045.6 488.9 L1052.8 484.3 L1060.0 479.7 L1067.2 475.1 L1073.3 472.4 L1081.0 468.8 L1088.8 465.1 L1096.5 461.5" stroke="#626262" stroke-width="3.2"/>
<path d="M1169.0 397.8 L1178.6 395.2 L1188.2 392.6 L1197.5 390.0" stroke="#6c6c6c" stroke-width="2.2"/>
<path d="M925.0 560.4 L930.7 554.0 L936.5 547.7 L943.4 541.2 L950.3 535.9 L957.1 530.7 L964.0 525.5 L970.7 520.1 L977.4 514.7 L983.9 509.1 L990.3 503.4 L996.7 497.6 L1004.2 492.3" stroke="#4e4e4e" stroke-width="2.9"/>
<path d="M1266.1 409.9 L1274.1 406.7 L1281.3 403.8 L1281.2 403.5 L1281.1 403.3 L1281.0 403.0 L1281.0 402.9 L1280.9 402.8 L1280.9 402.8 L1280.9 402.8 L1281.0 403.0 L1281.1 403.2 L1281.2 403.5" stroke="#6c6c6c" stroke-width="1.4"/>
<path d="M1216.2 370.9 L1224.5 368.4 L1232.9 366.2 L1241.4 364.1 L1249.9 362.1" stroke="#626262" stroke-width="1.9"/>
<path d="M1026.6 537.0 L1026.6 535.7 L1032.9 530.4 L1039.3 525.2 L1045.7 520.1 L1052.3 515.1 L1058.9 510.3 L1065.6 505.6 L1072.4 501.1 L1079.3 496.7 L1082.1 495.8 L1089.6 492.6 L1097.1 489.4 L1104.6 486.1" stroke="#626262" stroke-width="2.2"/>
<path d="M935.8 592.1 L941.2 585.6 L946.7 579.2 L952.3 572.9" stroke="#6c6c6c" stroke-width="1.1"/>
<path d="M1016.8 455.3 L1023.9 451.4 L1031.0 447.6 L1038.1 443.7 L1045.2 439.9 L1055.9 435.1 L1063.5 432.2 L1071.0 429.2 L1078.5 426.3 L1086.0 423.3 L1093.5 420.3 L1100.9 417.3 L1108.4 414.2" stroke="#4e4e4e" stroke-width="3.1"/>
<path d="M1101.4 413.3 L1109.1 410.3 L1116.8 407.3 L1127.6 404.0 L1135.6 402.0 L1143.6 400.0" stroke="#4e4e4e" stroke-width="3.0"/>
<path d="M996.6 505.7 L1002.7 500.9 L1009.6 496.8 L1016.5 492.7 L1023.4 488.5 L1030.3 484.2 L1037.1 480.0 L1043.9 475.6 L1050.7 471.3 L1057.4 466.9" stroke="#585858" stroke-width="3.1"/>
<path d="M944.4 566.2 L951.2 558.1 L957.9 552.1 L966.3 545.6" stroke="#4e4e4e" stroke-width="2.0"/>
<path d="M1034.8 529.2 L1041.7 524.2 L1048.6 519.3 L1055.5 514.4 L1062.4 509.6 L1069.4 504.8 L1076.4 500.0 L1078.8 498.1 L1086.4 494.4 L1094.0 490.7 L1101.6 486.9 L1109.1 483.1 L1116.6 479.2 L1124.2 475.3" stroke="#626262" stroke-width="1.2"/>
<path d="M1212.8 396.9 L1220.6 393.9 L1228.3 391.0 L1236.1 388.3 L1243.9 385.7 L1251.8 383.2 L1259.8 380.9 L1267.8 378.7 L1272.5 377.6 L1272.7 378.1 L1272.8 378.5 L1273.0 378.9 L1273.1 379.2" stroke="#4e4e4e" stroke-width="1.3"/>
<path d="M1123.1 471.7 L1130.7 467.3 L1138.2 462.8 L1142.7 459.9 L1150.8 456.3 L1158.9 452.9 L1167.0 449.6 L1175.2 446.6 L1183.5 443.8" stroke="#4e4e4e" stroke-width="1.2"/>
<path d="M1141.5 412.5 L1149.8 410.4 L1158.0 408.2 L1166.2 405.9 L1174.3 403.6" stroke="#626262" stroke-width="1.5"/>
<path d="M1051.9 509.6 L1058.6 504.3 L1065.3 499.0 L1072.1 493.7 L1075.2 490.8 L1082.8 486.7" stroke="#4e4e4e" stroke-width="1.1"/>
<path d="M875.3 661.6 L874.8 661.3 L874.3 660.9 L877.3 655.4 L881.5 648.4 L885.7 641.5 L890.1 634.7 L894.7 628.0 L899.5 621.4 L904.4 614.9 L909.4 608.4 L914.0 604.1" stroke="#6c6c6c" stroke-width="1.6"/>
<path d="M1076.7 494.3 L1081.3 491.8 L1090.4 487.4 L1099.4 483.0" stroke="#626262" stroke-width="2.5"/>
<path d="M1055.9 431.0 L1063.5 427.6 L1071.2 424.3 L1078.9 421.3 L1086.8 418.4" stroke="#4e4e4e" stroke-width="1.7"/>
<path d="M1219.2 385.9 L1228.6 383.2 L1238.0 380.7 L1247.5 378.4 L1256.9 376.0" stroke="#6c6c6c" stroke-width="1.2"/>
<path d="M1269.6 412.4 L1277.8 409.4 L1282.6 407.7 L1282.6 407.8 L1282.6 407.8 L1282.6 407.9 L1282.6 407.9 L1282.6 407.8 L1282.6 407.8 L1282.6 407.7 L1282.5 407.6" stroke="#585858" stroke-width="1.5"/>
<path d="M1220.0 417.5 L1226.9 414.8 L1233.9 412.1 L1240.8 409.6" stroke="#585858" stroke-width="1.7"/>
<path d="M907.6 533.5 L913.6 527.8 L923.5 518.8 L930.3 514.0 L936.9 509.0 L943.4 503.9 L949.7 498.5 L955.8 493.0 L961.8 487.3 L967.7 481.5 L973.6 475.7 L984.8 467.1" stroke="#6c6c6c" stroke-width="2.9"/>
<path d="M991.0 554.9 L996.8 548.6 L1002.7 542.3 L1008.6 536.1 L1014.6 530.0 L1020.7 524.0 L1023.5 522.2 L1030.6 517.5 L1037.8 513.0 L1045.1 508.5 L1052.4 504.1 L1059.7 499.8" stroke="#626262" stroke-width="1.5"/>
<path d="M1202.6 393.6 L1210.5 391.2 L1218.4 388.9 L1226.3 386.7 L1234.3 384.4 L1242.2 382.2 L1250.1 380.0 L1258.1 377.8 L1266.0 375.5 L1271.3 373.9 L1271.3 373.9 L1271.3 373.8 L1271.2 373.7 L1271.2 373.5" stroke="#626262" stroke-width="2.4"/>
<path d="M1254.0 423.1 L1263.3 419.2 L1272.6 415.0 L1281.9 410.8" stroke="#4e4e4e" stroke-width="1.4"/>
<path d="M1084.2 476.6 L1092.2 473.6 L1100.2 470.6 L1108.1 467.4 L1115.9 464.0 L1123.6 460.3 L1131.2 456.5" stroke="#585858" stroke-width="2.0"/>
<path d="M896.2 532.1 L901.3 525.4 L906.4 518.7 L917.0 507.9 L923.4 502.4 L929.8 497.0 L936.3 491.8 L942.9 486.6 L949.6 481.6 L956.5 476.6 L963.3 471.7" stroke="#585858" stroke-width="3.0"/>
<path d="M983.3 534.4 L990.0 528.8 L996.7 523.2 L1003.4 517.5" stroke="#626262" stroke-width="1.7"/>
<path d="M1025.6 465.3 L1032.6 461.4 L1039.7 457.6 L1046.8 453.9 L1055.7 449.4 L1063.2 446.7 L1070.8 444.0 L1078.3 441.2 L1085.7 438.3 L1093.2 435.3 L1100.5 432.2" stroke="#6c6c6c" stroke-width="2.5"/>
<path d="M1117.9 447.7 L1125.6 444.4 L1133.3 440.9 L1140.3 438.5 L1148.3 435.7 L1156.2 432.8 L1164.1 429.8 L1172.0 426.8 L1179.9 423.9 L1187.8 421.0 L1195.8 418.1 L1203.9 415.4 L1211.9 412.6" stroke="#626262" stroke-width="1.7"/>
<path d="M925.4 588.3 L930.7 582.0 L935.9 575.6 L941.1 569.2 L946.2 562.7 L951.3 556.2 L956.0 551.2 L961.9 545.5 L968.0 539.8 L974.0 534.3 L980.2 528.8 L986.5 523.4" stroke="#6c6c6c" stroke-width="1.7"/>
<path d="M1176.7 434.5 L1184.5 431.9 L1192.2 429.2 L1199.9 426.4 L1207.9 423.5 L1215.5 420.6 L1223.2 417.7 L1230.8 414.7 L1238.5 411.8 L1246.2 409.0 L1253.8 406.1 L1261.5 403.4 L1269.3 400.6 L1277.0 398.0" stroke="#626262" stroke-width="2.4"/>
<path d="M862.2 618.7 L865.9 611.4 L869.5 604.0 L872.9 596.6 L876.3 589.1 L882.8 579.0 L887.7 572.5 L892.8 566.1 L898.0 559.9 L903.4 553.8 L909.0 547.9 L914.7 542.1 L920.5 536.4 L929.0 528.3" stroke="#4e4e4e" stroke-width="1.7"/>
<path d="M954.8 589.6 L960.5 582.7 L966.1 575.7 L968.5 572.1 L974.8 565.7 L981.1 559.3 L987.5 553.0 L994.0 546.8" stroke="#585858" stroke-width="1.2"/>
<path d="M1132.2 425.1 L1141.0 422.7 L1149.6 420.0 L1158.3 417.1 L1166.9 414.1 L1175.4 411.1 L1184.0 408.0" stroke="#4e4e4e" stroke-width="1.3"/>
<path d="M1170.4 441.2 L1179.9 438.3 L1189.3 435.2 L1198.7 432.0 L1208.4 428.6" stroke="#4e4e4e" stroke-width="2.5"/>
<path d="M1019.8 506.6 L1026.6 501.7 L1033.4 496.8 L1040.1 491.8 L1046.9 486.8 L1053.7 481.9 L1060.6 477.1 L1066.2 473.3 L1073.8 469.8 L1081.5 466.5 L1089.2 463.2 L1097.0 460.1" stroke="#6c6c6c" stroke-width="3.2"/>
<path d="M1082.6 452.1 L1090.5 448.9 L1098.4 445.8 L1106.3 442.8 L1114.2 439.7 L1122.1 436.6 L1129.9 433.4 L1137.9 431.0 L1146.0 428.5 L1154.1 425.9 L1162.1 423.2" stroke="#6c6c6c" stroke-width="2.8"/>
<path d="M1023.5 519.1 L1031.0 514.6 L1038.6 510.2 L1046.2 505.9 L1053.8 501.4 L1061.3 496.9 L1068.7 492.2 L1072.5 489.2 L1080.4 485.2 L1088.1 481.1 L1095.8 476.7" stroke="#585858" stroke-width="1.6"/>
<path d="M923.9 542.2 L929.6 535.2 L938.2 527.2 L944.9 521.2" stroke="#585858" stroke-width="1.6"/>
<path d="M868.1 586.6 L876.1 574.9 L882.1 568.1 L888.2 561.4 L894.4 554.8 L900.7 548.2 L907.0 541.6" stroke="#6c6c6c" stroke-width="1.5"/>
<path d="M988.9 499.6 L997.7 493.3 L1006.3 488.8 L1014.8 484.2 L1023.2 479.4" stroke="#6c6c6c" stroke-width="3.0"/>
<path d="M1012.5 474.3 L1019.3 470.0 L1026.0 465.4 L1032.6 460.8 L1039.3 456.2 L1045.9 451.6 L1054.8 446.2 L1062.1 442.7 L1069.4 439.4 L1076.9 436.3 L1084.4 433.3 L1092.0 430.6 L1099.6 428.0 L1107.3 425.4" stroke="#585858" stroke-width="1.9"/>
<path d="M1025.8 484.5 L1033.2 479.6 L1040.6 474.5 L1047.9 469.4 L1055.1 464.2 L1063.0 459.5" stroke="#585858" stroke-width="1.9"/>
<path d="M1205.1 442.7 L1213.6 439.3 L1221.5 435.8 L1229.3 432.2 L1237.1 428.6 L1244.9 424.9 L1252.8 421.4 L1260.7 418.0 L1268.6 414.7 L1276.6 411.6 L1283.1 409.3 L1283.2 409.6 L1283.3 410.0" stroke="#4e4e4e" stroke-width="2.2"/>
<path d="M905.4 652.1 L910.2 645.2 L915.0 638.3 L919.8 631.4 L924.7 624.6 L926.6 621.9 L932.1 615.6 L937.7 609.4" stroke="#6c6c6c" stroke-width="1.4"/>
<path d="M952.7 529.2 L958.8 524.0 L964.7 518.6 L970.6 513.0 L976.3 507.3 L981.9 501.6 L987.6 495.8 L995.0 489.1 L1001.6 484.5 L1008.3 480.1 L1015.2 475.9 L1022.1 471.8" stroke="#4e4e4e" stroke-width="2.7"/>
<path d="M997.1 455.9 L1004.7 451.6 L1012.3 447.4 L1020.0 443.2 L1027.7 439.0 L1035.5 435.0 L1047.7 428.9 L1055.9 425.9 L1064.2 422.9 L1072.4 419.9 L1080.6 416.8" stroke="#4e4e4e" stroke-width="3.1"/>
<path d="M1145.7 405.1 L1153.5 402.8 L1161.3 400.6 L1169.1 398.4 L1176.9 396.2 L1184.7 394.0 L1192.6 391.8 L1200.1 389.7 L1207.9 387.5 L1215.7 385.2 L1223.5 383.0 L1231.3 380.7 L1239.1 378.4 L1246.8 376.1" stroke="#4e4e4e" stroke-width="1.0"/>
<path d="M1068.1 477.1 L1075.0 473.8 L1083.9 469.4 L1092.8 465.1 L1101.7 460.8" stroke="#4e4e4e" stroke-width="2.7"/>
<path d="M1160.2 409.7 L1168.7 407.8 L1177.1 405.7 L1185.5 403.5 L1193.8 401.0" stroke="#6c6c6c" stroke-width="2.3"/>
<path d="M961.9 483.9 L968.2 478.4 L974.5 472.7 L986.5 464.4 L993.6 460.0 L1000.8 455.5 L1008.0 451.2 L1015.3 446.9 L1022.7 442.8 L1030.2 438.9 L1037.7 435.1" stroke="#626262" stroke-width="2.5"/>
<path d="M1192.8 387.5 L1200.8 385.6 L1208.8 383.6 L1216.7 381.4 L1224.6 379.0 L1232.5 376.6 L1240.3 374.0 L1248.1 371.3 L1255.8 368.6 L1263.6 365.9" stroke="#6c6c6c" stroke-width="3.2"/>
<path d="M1110.7 452.1 L1118.6 448.2 L1126.4 444.4 L1133.3 441.1" stroke="#6c6c6c" stroke-width="1.0"/>
<path d="M1261.2 409.0 L1269.3 406.2 L1277.5 403.4 L1280.8 402.4 L1280.9 402.7 L1281.0 402.9 L1281.0 403.0 L1281.0 403.1 L1281.1 403.2 L1281.0 403.1" stroke="#626262" stroke-width="2.6"/>
<path d="M1092.9 471.2 L1100.4 467.0 L1108.0 462.9 L1115.6 458.9 L1123.3 455.1 L1131.0 451.5 L1137.0 449.0 L1145.3 446.6 L1153.5 444.4 L1161.8 442.1 L1170.1 439.8 L1178.3 437.4 L1186.5 434.9" stroke="#626262" stroke-width="2.0"/>
<path d="M1192.7 385.0 L1201.0 382.7 L1209.3 380.3 L1217.6 377.8 L1225.8 375.3 L1234.1 372.8 L1242.3 370.3 L1250.5 367.8 L1258.8 365.3 L1267.1 362.8 L1267.6 362.7 L1267.6 362.7" stroke="#6c6c6c" stroke-width="2.9"/>
<path d="M952.3 521.1 L958.4 515.9 L964.4 510.5 L970.4 505.1 L976.3 499.7 L982.3 494.3 L988.2 488.8 L997.1 482.7 L1003.9 478.5" stroke="#626262" stroke-width="2.1"/>
<path d="M1210.5 390.8 L1218.6 388.8 L1226.8 386.9 L1234.9 385.0 L1243.0 383.0 L1251.0 380.8 L1259.0 378.5 L1266.9 376.0 L1271.5 374.4 L1271.4 374.1 L1271.2 373.7" stroke="#6c6c6c" stroke-width="1.0"/>
<path d="M1034.9 499.0 L1041.6 494.5 L1048.1 489.8 L1054.6 485.1 L1061.1 480.4 L1067.7 475.7 L1073.0 472.9 L1080.2 469.3 L1087.4 465.8 L1094.7 462.4 L1102.0 459.1 L1109.3 455.9" stroke="#4e4e4e" stroke-width="2.4"/>
<path d="M929.9 529.3 L935.9 523.8 L941.8 518.4 L947.8 513.0 L953.8 507.6 L959.8 502.3 L965.9 497.1 L972.1 491.9" stroke="#626262" stroke-width="2.5"/>
<path d="M987.6 490.3 L996.7 483.8 L1004.2 479.2 L1011.7 474.8 L1019.2 470.4 L1026.8 466.0 L1034.4 461.8 L1042.0 457.5 L1049.6 453.3 L1059.2 448.9 L1067.3 445.7" stroke="#4e4e4e" stroke-width="2.5"/>
<path d="M1140.7 447.0 L1148.2 443.9 L1155.7 440.9 L1163.2 437.9 L1170.8 435.1 L1178.4 432.4 L1186.0 429.8" stroke="#6c6c6c" stroke-width="3.1"/>
<path d="M956.8 569.3 L961.8 562.9 L965.4 559.4 L971.4 554.0 L977.7 548.8 L984.1 543.8 L990.6 538.9 L997.2 534.1 L1003.7 529.3 L1010.2 524.4" stroke="#626262" stroke-width="2.3"/>
<path d="M887.0 543.0 L892.7 536.1 L898.6 529.2 L904.5 522.3 L915.4 511.1" stroke="#626262" stroke-width="2.2"/>
<path d="M1133.8 457.6 L1140.9 454.6 L1150.9 451.7 L1161.0 448.8" stroke="#6c6c6c" stroke-width="2.1"/>
<path d="M1041.8 520.1 L1048.4 514.7 L1055.2 509.5 L1062.0 504.6 L1069.0 499.8 L1076.1 495.2 L1079.3 493.7" stroke="#4e4e4e" stroke-width="1.6"/>
<path d="M995.4 519.1 L1002.1 513.3 L1007.5 508.7 L1015.0 504.0" stroke="#626262" stroke-width="1.1"/>
<path d="M881.4 636.0 L886.1 628.9 L891.0 622.0 L896.0 615.2 L901.1 608.4 L905.9 602.5" stroke="#6c6c6c" stroke-width="1.9"/>
<path d="M1025.4 521.8 L1032.6 517.2 L1039.8 512.5 L1046.9 507.8 L1054.0 503.0 L1061.1 498.1 L1068.1 493.2 L1075.0 488.2" stroke="#4e4e4e" stroke-width="3.2"/>
<path d="M1243.5 377.9 L1252.8 375.1 L1262.1 372.2 L1269.9 369.8 L1269.9 369.7" stroke="#4e4e4e" stroke-width="2.5"/>
<path d="M913.7 612.0 L917.2 607.8 L922.5 601.7 L927.8 595.6 L933.1 589.4 L938.4 583.3 L943.8 577.2 L949.1 571.1" stroke="#626262" stroke-width="2.0"/>
<path d="M1131.4 444.8 L1138.3 442.5 L1146.7 440.2 L1155.1 438.0 L1163.5 435.7 L1171.9 433.4 L1180.2 430.8 L1188.5 428.2" stroke="#585858" stroke-width="3.0"/>
<path d="M1007.5 513.3 L1012.1 509.2 L1019.0 503.9 L1025.8 498.6 L1032.7 493.3 L1039.7 488.2 L1046.8 483.3 L1054.0 478.5 L1061.3 474.0" stroke="#585858" stroke-width="3.0"/>
<path d="M1177.8 439.8 L1185.6 437.4 L1193.4 434.9 L1201.2 432.3 L1209.2 429.6 L1216.9 426.7 L1224.6 423.8 L1232.2 420.9 L1239.8 417.8 L1247.4 414.8" stroke="#626262" stroke-width="3.0"/>
<path d="M1124.9 434.5 L1132.4 431.5 L1140.1 429.0 L1147.7 426.6 L1155.4 424.1 L1163.1 421.6 L1170.8 419.2 L1178.5 416.7 L1186.1 414.2 L1193.8 411.8 L1201.5 409.4 L1209.2 406.8 L1216.8 404.3 L1224.5 401.8" stroke="#6c6c6c" stroke-width="2.1"/>
<path d="M1132.5 397.5 L1140.5 395.5 L1148.5 393.4 L1156.4 391.1 L1164.3 388.7 L1172.2 386.2 L1180.1 383.8 L1188.0 381.3 L1195.3 379.0 L1203.2 376.5" stroke="#4e4e4e" stroke-width="1.5"/>
<path d="M1270.3 371.7 L1270.5 371.6 L1270.5 371.6 L1270.6 371.8 L1270.7 372.0 L1270.8 372.4 L1270.9 372.8 L1271.0 373.1 L1271.2 373.5 L1271.2 373.7 L1271.3 373.9" stroke="#6c6c6c" stroke-width="1.1"/>
<path d="M1234.8 404.0 L1243.5 401.4 L1252.1 398.6 L1260.8 395.8 L1269.4 392.9" stroke="#626262" stroke-width="2.4"/>
<path d="M966.6 479.9 L972.9 474.8 L984.6 466.9 L991.9 463.2 L999.3 459.6 L1006.6 456.0 L1014.0 452.4" stroke="#6c6c6c" stroke-width="1.4"/>
<path d="M1180.8 412.6 L1189.1 409.9 L1197.3 407.2 L1205.5 404.5 L1213.8 401.8 L1222.1 399.2 L1230.4 396.6 L1238.7 394.1 L1247.0 391.6" stroke="#6c6c6c" stroke-width="1.7"/>
<path d="M1197.3 376.8 L1205.6 374.7 L1214.0 372.7 L1222.3 370.6 L1230.7 368.6 L1239.0 366.5 L1247.4 364.4 L1255.7 362.2 L1263.9 359.9 L1266.4 359.2 L1266.3 359.0 L1266.3 358.8" stroke="#626262" stroke-width="2.9"/>
<path d="M1086.1 446.9 L1093.6 443.8 L1101.0 440.7 L1108.5 437.5 L1115.9 434.2 L1123.3 430.9 L1131.2 427.6 L1138.9 425.1 L1146.6 422.5" stroke="#626262" stroke-width="1.1"/>
<path d="M984.9 468.6 L992.0 464.2 L999.2 460.1 L1006.4 456.0 L1013.7 452.1 L1021.1 448.3 L1028.6 444.6 L1036.1 441.1 L1043.6 437.5 L1055.1 432.9 L1063.0 430.2" stroke="#585858" stroke-width="3.1"/>
<path d="M946.8 535.4 L952.6 531.2 L958.3 527.0 L963.9 522.7" stroke="#4e4e4e" stroke-width="1.5"/>
<path d="M1113.2 475.6 L1120.6 471.3 L1127.9 467.1 L1135.3 462.9 L1139.7 460.1" stroke="#6c6c6c" stroke-width="1.6"/>
<path d="M1265.6 389.8 L1273.5 386.9 L1275.4 386.3 L1275.5 386.4 L1275.6 386.7 L1275.7 387.1" stroke="#585858" stroke-width="1.8"/>
<path d="M1213.4 426.7 L1221.8 423.4 L1230.1 419.9 L1238.4 416.3 L1246.6 412.6 L1254.8 409.0" stroke="#4e4e4e" stroke-width="1.9"/>
<path d="M947.8 557.1 L953.9 551.6 L961.2 545.8 L968.5 539.8 L975.6 533.8 L982.7 527.6" stroke="#6c6c6c" stroke-width="3.2"/>
<path d="M969.1 533.5 L975.7 527.8 L982.2 521.9 L988.6 516.0 L994.9 510.1 L1001.3 504.1 L1007.8 499.4 L1015.1 494.6 L1022.4 489.8" stroke="#585858" stroke-width="2.0"/>
<path d="M1072.2 481.7 L1079.3 477.6 L1086.5 473.6 L1093.8 469.7 L1101.1 466.0 L1108.5 462.4" stroke="#6c6c6c" stroke-width="1.1"/>
<path d="M1002.4 538.8 L1008.9 532.8 L1015.4 526.7 L1018.0 523.8 L1025.1 518.4 L1032.2 513.1 L1039.3 507.7 L1046.5 502.4 L1053.6 497.1 L1060.9 492.0" stroke="#626262" stroke-width="3.2"/>
<path d="M1208.7 403.1 L1216.5 400.3 L1224.2 397.5 L1232.0 394.8 L1239.8 392.2 L1247.6 389.6 L1255.4 387.1 L1263.3 384.7 L1271.2 382.4 L1273.9 381.7 L1274.0 382.0 L1274.1 382.2 L1274.1 382.4" stroke="#6c6c6c" stroke-width="2.2"/>
<path d="M1202.2 381.4 L1210.1 378.9 L1218.0 376.5 L1225.8 374.1 L1233.8 371.7 L1241.7 369.4 L1249.6 367.1 L1257.5 364.8 L1265.5 362.6 L1267.4 362.1 L1267.4 362.3 L1267.5 362.4 L1267.5 362.5 L1267.6 362.7" stroke="#6c6c6c" stroke-width="2.7"/>
<path d="M1111.8 469.8 L1119.0 466.0 L1126.1 462.3 L1133.3 458.5 L1137.8 455.8 L1145.3 452.8 L1152.9 450.0 L1160.4 447.2 L1168.0 444.5 L1175.7 441.9 L1183.3 439.3 L1190.9 436.8 L1198.6 434.3" stroke="#6c6c6c" stroke-width="2.9"/>
<path d="M1202.2 378.9 L1209.7 377.0 L1217.3 375.3 L1224.9 373.6" stroke="#4e4e4e" stroke-width="2.4"/>
<path d="M1007.7 509.6 L1016.0 504.7 L1024.2 499.8 L1032.4 494.8" stroke="#4e4e4e" stroke-width="2.9"/>
<path d="M852.4 642.0 L856.5 634.7 L860.6 627.5 L864.8 620.2 L869.0 613.0 L873.2 605.8 L877.5 598.7 L881.8 591.5 L888.7 582.7 L894.2 576.5 L899.8 570.3 L905.3 564.0" stroke="#585858" stroke-width="1.8"/>
<path d="M930.1 620.4 L935.9 613.5 L941.7 606.5 L947.4 599.5" stroke="#585858" stroke-width="2.4"/>
<path d="M922.6 570.6 L928.7 564.4 L934.5 558.1 L940.1 551.6 L945.9 545.0 L952.0 538.9 L958.0 532.7 L964.0 526.4 L969.9 520.2 L975.9 514.0" stroke="#626262" stroke-width="2.5"/>
<path d="M1111.9 433.9 L1119.9 430.6 L1127.8 427.5 L1136.6 425.1 L1144.9 423.0" stroke="#6c6c6c" stroke-width="1.8"/>
<path d="M1115.2 424.7 L1123.1 421.1 L1132.6 417.5 L1140.8 414.5 L1149.0 411.5 L1157.3 408.5 L1165.5 405.6 L1173.8 402.8" stroke="#6c6c6c" stroke-width="3.2"/>
<path d="M1079.5 498.1 L1087.2 493.3 L1094.9 488.5 L1102.6 483.8 L1110.4 479.4 L1118.4 475.1 L1126.4 471.2 L1134.6 467.4 L1142.8 463.9" stroke="#626262" stroke-width="1.6"/>
<path d="M883.2 666.6 L882.9 666.4 L883.1 665.9 L887.9 659.2 L892.9 652.8 L898.1 646.4 L903.4 640.1 L908.8 633.9 L914.2 627.7 L919.6 621.4 L922.3 618.5 L927.9 612.5 L933.3 606.4" stroke="#626262" stroke-width="3.1"/>
<path d="M1168.9 441.0 L1176.5 438.3 L1184.2 435.6 L1192.0 433.0 L1199.7 430.4 L1207.7 427.7" stroke="#585858" stroke-width="1.5"/>
<path d="M1094.8 459.4 L1102.4 455.6 L1110.0 451.9 L1117.6 448.3 L1125.2 444.7 L1133.0 441.3 L1140.0 439.1 L1148.1 436.7 L1156.2 434.3 L1164.3 432.0 L1172.4 429.6 L1180.4 427.1 L1188.5 424.6" stroke="#585858" stroke-width="1.7"/>
<path d="M898.0 643.5 L903.4 635.9 L908.8 628.2 L914.2 620.7 L919.7 613.1 L923.8 608.9" stroke="#626262" stroke-width="1.4"/>
<path d="M1059.8 497.0 L1067.0 492.4 L1074.1 487.7 L1078.3 485.6 L1085.8 481.6 L1093.3 477.4 L1100.7 473.2 L1108.1 468.9 L1115.6 464.6 L1123.0 460.4 L1130.5 456.4 L1138.2 452.5 L1143.9 450.5" stroke="#626262" stroke-width="1.6"/>
<path d="M1140.1 400.9 L1148.3 398.6 L1156.4 396.3 L1164.5 394.1 L1172.6 391.8 L1180.7 389.5 L1188.8 387.3" stroke="#6c6c6c" stroke-width="3.1"/>
<path d="M1256.2 383.1 L1264.2 380.5 L1272.2 378.0 L1272.6 377.8 L1272.6 377.9 L1272.6 377.9 L1272.6 377.9 L1272.6 377.9 L1272.6 377.9 L1272.6 377.9 L1272.6 377.9 L1272.6 377.9" stroke="#6c6c6c" stroke-width="2.7"/>
<path d="M960.9 505.2 L967.1 499.1 L973.5 493.1 L979.9 487.1 L989.7 479.4 L997.2 475.0 L1004.9 470.8 L1012.7 466.7 L1020.5 462.8 L1028.4 458.9 L1036.3 455.0" stroke="#585858" stroke-width="1.8"/>
<path d="M1038.8 522.5 L1045.9 517.9 L1052.9 513.2 L1059.8 508.4 L1066.6 503.4 L1073.3 498.2 L1075.8 495.5 L1083.1 491.3 L1090.5 487.1 L1097.8 482.9" stroke="#6c6c6c" stroke-width="1.7"/>
<path d="M1228.5 396.4 L1237.5 393.5 L1246.4 390.3 L1255.2 387.0 L1264.0 383.5 L1272.8 380.0" stroke="#6c6c6c" stroke-width="1.3"/>
<path d="M890.8 622.7 L895.3 615.8 L899.7 608.8 L903.7 602.4 L908.9 596.0 L914.0 589.6" stroke="#6c6c6c" stroke-width="1.9"/>
<path d="M1083.3 486.5 L1090.7 482.1 L1098.1 477.8 L1105.5 473.5 L1113.0 469.4 L1120.6 465.5 L1128.3 461.7 L1136.1 458.2 L1141.3 456.2 L1149.5 453.8 L1157.7 451.5" stroke="#626262" stroke-width="2.4"/>
<path d="M861.9 653.0 L865.6 648.1 L870.7 640.8 L875.5 633.4 L880.1 625.8 L884.5 618.0 L888.7 610.1" stroke="#626262" stroke-width="3.1"/>
<path d="M1044.5 458.5 L1051.7 454.4 L1060.7 450.2 L1068.4 447.1 L1076.1 444.0 L1083.8 440.8 L1091.5 437.7 L1099.1 434.5 L1106.8 431.3 L1114.4 428.0 L1122.1 424.7 L1130.9 421.4 L1138.8 418.9 L1146.7 416.4" stroke="#6c6c6c" stroke-width="1.9"/>
<path d="M890.7 637.8 L896.1 629.7 L901.5 621.6 L906.9 613.4 L911.4 607.0" stroke="#585858" stroke-width="3.1"/>
<path d="M1175.4 442.2 L1184.4 438.7 L1193.4 435.1 L1202.3 431.5 L1211.6 427.7" stroke="#585858" stroke-width="2.2"/>
<path d="M985.3 565.2 L991.7 559.9 L997.9 554.4 L1004.0 548.7 L1009.9 542.8" stroke="#585858" stroke-width="1.0"/>
<path d="M1032.2 442.7 L1039.6 438.8 L1050.9 433.4 L1058.6 430.3 L1066.4 427.3 L1074.2 424.2 L1081.9 421.1 L1089.7 417.9 L1097.4 414.8 L1105.2 411.6 L1112.9 408.4 L1123.7 404.4" stroke="#585858" stroke-width="2.9"/>
<path d="M1063.9 440.8 L1070.6 438.3 L1077.3 435.9 L1084.0 433.3" stroke="#4e4e4e" stroke-width="1.3"/>
<path d="M1021.2 489.1 L1027.9 484.4 L1034.7 479.8 L1041.4 475.1 L1048.2 470.5 L1055.0 466.0 L1062.1 461.9 L1069.6 458.6 L1077.1 455.4 L1084.7 452.3 L1092.3 449.3 L1099.9 446.3" stroke="#4e4e4e" stroke-width="1.2"/>
</g>
<g fill="none" stroke="#e6e6e6" stroke-linecap="round" stroke-linejoin="round" filter="url(#vb)">
<path d="M1289.0 515.7 L1275.0 530.0 L1261.0 549.8 L1256.0 566.8" stroke-width="4"/>
<path d="M1296.7 521.8 L1296.7 545.0 L1300.0 557.5" stroke-width="2.5"/>
<path d="M1348.0 545.0 L1366.4 545.0 L1379.0 526.5" stroke-width="2.5"/>
<path d="M1092.0 719.0 L1100.0 745.0 L1110.0 775.0" stroke-width="2"/>
<path d="M1120.0 712.0 L1128.0 740.0 L1135.0 770.0 L1140.0 790.0" stroke-width="2"/>
<path d="M1166.0 693.0 L1170.0 720.0 L1175.0 750.0 L1172.0 775.0" stroke-width="2"/>
<path d="M1190.0 694.0 L1195.0 730.0 L1200.0 760.0 L1203.0 790.0" stroke-width="2"/>
<path d="M1056.0 745.0 L1045.0 770.0 L1050.0 795.0" stroke-width="2"/>
<path d="M1181.0 597.0 L1185.0 625.0 L1190.0 650.0" stroke-width="2"/>
<path d="M1158.0 582.0 L1140.0 610.0 L1120.0 640.0" stroke-width="2"/>
<path d="M1226.0 578.0 L1240.0 610.0 L1250.0 640.0" stroke-width="2"/>
<path d="M1483.0 564.0 L1470.0 600.0 L1465.0 640.0" stroke-width="2"/>
<path d="M1538.8 665.3 L1520.0 680.0 L1505.0 690.0" stroke-width="2"/>
<path d="M1133.0 531.6 L1110.0 560.0 L1085.0 590.0 L1070.0 610.0" stroke-width="2.5"/>
<path d="M1066.0 492.0 L1100.0 470.0 L1150.0 434.0 L1214.0 404.0 L1260.0 392.0 L1299.0 382.0 L1330.0 372.0" stroke-width="3"/>
<path d="M1283.0 498.0 L1290.0 460.0 L1300.0 420.0 L1299.0 382.0" stroke-width="2.5"/>
<path d="M1325.0 413.0 L1310.0 395.0 L1299.0 382.0" stroke-width="2.5"/>
<path d="M1028.0 670.0 L1038.8 698.0 L1048.4 717.5 L1056.0 744.7 L1075.0 732.0 L1093.0 721.0 L1120.0 711.7 L1147.0 694.0 L1174.4 692.0 L1205.0 696.0 L1224.0 694.4 L1235.7 686.7 L1264.7 663.4 L1293.8 632.4" stroke-width="6.5"/>
<path d="M1293.8 632.4 L1319.0 640.0 L1348.0 632.4 L1377.0 591.0 L1396.3 581.5 L1435.0 571.8 L1481.6 556.3" stroke-width="2.5"/>
<path d="M1481.6 556.3 L1493.0 552.4 L1510.6 540.8 L1512.5 517.5 L1491.0 496.0 L1493.0 451.6 L1508.7 440.0 L1512.0 420.0 L1510.0 385.0" stroke-width="5"/>
<path d="M1344.0 440.0 L1367.0 451.6 L1415.7 463.0 L1421.5 476.8 L1454.4 475.9 L1470.0 480.7 L1491.0 496.0" stroke-width="5"/>
<path d="M1421.5 476.8 L1408.0 537.0 L1388.5 556.3" stroke-width="2.5"/>
<path d="M1338.0 537.0 L1348.0 560.0 L1350.0 571.8 L1297.0 600.0 L1294.0 630.0" stroke-width="3"/>
<path d="M1313.0 465.0 L1320.0 490.0 L1315.0 510.0" stroke-width="4"/>
<path d="M1133.0 531.6 L1145.0 560.0 L1158.0 582.0 L1181.4 597.5 L1200.8 595.6 L1226.0 578.0 L1251.0 580.0 L1270.5 589.8 L1294.0 630.0" stroke-width="3"/>
<path d="M1133.0 531.6 L1115.0 500.0 L1090.0 490.0 L1060.0 500.0" stroke-width="2.5"/>
<path d="M1319.0 640.0 L1342.0 640.0 L1370.0 660.0 L1402.0 679.0 L1416.0 713.8 L1400.0 722.0 L1384.0 730.0" stroke-width="3"/>
<path d="M1538.8 665.3 L1567.8 636.3 L1587.2 613.0 L1608.5 591.7 L1608.5 572.3 L1635.7 568.4 L1664.7 555.0 L1678.0 543.0" stroke-width="3"/>
<path d="M1569.8 640.0 L1597.0 667.3 L1606.6 694.4" stroke-width="2.5"/>
<path d="M1483.5 564.0 L1493.0 591.0 L1500.0 630.0 L1480.0 660.0" stroke-width="2.5"/>
<path d="M1512.0 525.0 L1526.0 517.5 L1551.0 533.0 L1570.7 548.5" stroke-width="2.5"/>
</g>
</g>
<path d="M890.7 717.2 L892.6 707.5 L899.4 692.0 L909.0 675.5 L918.8 662.0 L926.5 655.2 L934.3 652.3 L947.8 647.4 L955.6 639.7 L967.2 639.2 L976.9 641.6 L996.3 647.4 L1015.7 654.2 L1029.2 662.0 L1031.2 668.8 L1020.5 670.7 L1007.0 670.7 L996.3 667.8 L976.9 668.8 L962.4 669.7 L952.7 670.7 L951.7 676.5 L938.1 682.3 L930.4 684.3 L926.5 678.4 L916.8 679.4 L911.0 688.1 L904.2 699.8 L898.4 709.5 L894.5 719.1Z" fill="#e0e0e0"/>
<path d="M980.8 564.7 L988.5 555.0 L1006.0 539.5 L1019.5 526.0 L1035.0 514.3 L1046.7 508.5 L1053.4 514.3 L1046.7 524.0 L1031.2 535.7 L1015.7 551.2 L1000.0 560.9 L984.7 566.7Z" fill="#e0e0e0"/>
<path d="M1415.6 289.6 L1422.0 293.9 L1434.8 303.5 L1448.6 309.9 L1451.8 316.0 L1454.0 322.6 L1464.6 329.0 L1480.6 330.1 L1496.6 334.4 L1503.0 340.8 L1507.3 348.2 L1518.0 352.5 L1531.8 360.0 L1541.4 365.3 L1546.7 371.7 L1542.5 374.9 L1534.0 376.0 L1528.6 378.0 L1518.0 378.0 L1510.5 376.0 L1502.0 379.0 L1491.3 376.0 L1480.6 356.8 L1464.6 344.0 L1447.6 331.2 L1440.0 329.0 L1447.6 329.0 L1442.2 316.2 L1434.8 309.9 L1422.0 301.3 L1414.5 292.8Z" fill="#e0e0e0"/>
<path d="M1398.5 313.0 L1407.0 311.0 L1416.7 316.2 L1426.2 320.5 L1429.4 325.8 L1430.5 329.0 L1403.9 328.0 L1409.2 322.6 L1400.7 316.2Z" fill="#e0e0e0"/>
<g fill="none" stroke="#e0e0e0" stroke-linecap="round" stroke-linejoin="round">
<path d="M1325.0 413.0 L1334.4 433.4 L1346.8 442.7 L1359.2 450.5 L1376.3 452.0 L1391.8 455.0 L1407.3 452.0" stroke-width="5.5"/>
<path d="M1407.3 452.0 L1420.0 462.0" stroke-width="3.5"/>
<path d="M1309.6 462.9 L1318.0 472.0 L1314.3 486.0 L1322.0 494.0" stroke-width="7"/>
<path d="M1260.0 521.8 L1283.0 514.0 L1291.0 506.3 L1311.0 507.8 L1334.4 512.5 L1337.5 529.5 L1340.6 545.0" stroke-width="6"/>
<path d="M1283.0 498.5 L1291.0 506.3" stroke-width="7"/>
<path d="M1150.0 575.0 L1160.0 586.0 L1181.0 597.0" stroke-width="8"/>
<path d="M1200.0 590.0 L1226.0 578.0 L1251.0 580.0 L1266.0 588.0" stroke-width="5"/>
<path d="M1055.0 500.0 L1070.0 489.0 L1088.0 475.0" stroke-width="7"/>
<path d="M1430.7 765.4 L1411.8 772.7 L1403.0 775.6 L1400.2 787.2 L1392.9 796.0" stroke-width="5"/>
<path d="M1402.0 788.0 L1406.0 804.7" stroke-width="4"/>
<path d="M1415.7 463.0 L1440.0 473.0 L1455.0 476.0" stroke-width="4.5"/>
</g>
<path d="M1371.0 728.4 L1359.4 735.0 L1353.6 746.5 L1355.0 758.0 L1359.4 767.0 L1349.3 775.6 L1334.7 785.8 L1326.0 791.6 L1315.8 790.2 L1317.3 796.0 L1327.5 804.7 L1334.7 813.4 L1336.2 820.7 L1326.0 825.0 L1326.0 833.8 L1331.8 842.5 L1339.0 846.9 L1342.0 844.0 L1334.7 836.7 L1334.7 828.0 L1340.5 819.2 L1339.0 810.5 L1336.2 801.8 L1347.8 793.0 L1361.0 781.4 L1363.8 769.8 L1362.3 758.2 L1365.3 745.0 L1372.5 737.8 L1384.2 733.4 L1382.7 728.4Z" fill="#e0e0e0"/>
<ellipse cx="1060" cy="527" rx="10" ry="5" transform="rotate(-30 1060 527)" fill="#e0e0e0"/>
</svg>
</div>
<div class="a" style="left:600px;top:1011px;width:1320px;height:2px;background:#a0a0a0"></div>
<div class="a" style="left:600px;top:1015px;width:1320px;height:1px;background:#a0a0a0"></div>

<!-- toolbar contents -->
<svg class="a" style="left:612px;top:50px" width="17" height="17" viewBox="0 0 17 17"><circle cx="6.5" cy="6.5" r="5.3" fill="none" stroke="#000066" stroke-width="1.3"/><path d="M6.5 3.5v6M3.5 6.5h6" stroke="#000080" stroke-width="2"/><path d="M10.3 10.3L15 15" stroke="#000080" stroke-width="2.2"/></svg>
<span class="a" style="left:633px;top:52px;line-height:16px">Zoom in</span>
<span class="a" style="left:718px;top:52px;line-height:16px;color:#a0a0a0">Zoom out</span>
<div class="a" style="left:784px;top:48px;width:1px;height:22px;background:#a0a0a0"></div>
<div class="a" style="left:789px;top:48px;width:90px;height:22px;background:#f8f8f8;border-top:1px solid #a0a0a0;border-left:1px solid #a0a0a0"></div>
<svg class="a" style="left:802px;top:52px" width="13" height="15" viewBox="0 0 13 15"><path d="M3 8V3.5a1 1 0 0 1 2 0V7V2.5a1 1 0 0 1 2 0V7V3a1 1 0 0 1 2 0V7.5V5a1 1 0 0 1 2 0V10q0 4-4 4H6q-2 0-3-2L1 9a1 1 0 0 1 2-1z" fill="#fff" stroke="#404040" stroke-width="0.9"/></svg>
<span class="a" style="left:820px;top:53px;line-height:16px">Pan map</span>
<svg class="a" style="left:886px;top:52px" width="15" height="14" viewBox="0 0 15 14"><rect x="0.7" y="0.7" width="13.3" height="12.3" rx="2" fill="none" stroke="#333" stroke-width="1.3" stroke-dasharray="4 2.2"/></svg>
<span class="a" style="left:906px;top:52px;line-height:16px">Rectangle</span>
<div class="a" style="left:977px;top:48px;width:280px;height:22px;background:#fff"></div>
<svg class="a" style="left:1264px;top:51px" width="15" height="15" viewBox="0 0 15 15"><path d="M7.5 0.5v10M3.5 6.5l4 4 4-4M1 10.5v3h13v-3" fill="none" stroke="#555" stroke-width="1.2"/></svg>
<span class="a" style="left:1284px;top:52px;line-height:16px">Download</span>

<!-- status bar -->
<div class="sp" style="left:0;width:100px">MapsID: 3918</div>
<div class="sp" style="left:102px;width:78px;padding-left:2px">png</div>
<div class="sp" style="left:182px;width:98px;padding-left:2px">MinZoom: 8</div>
<div class="sp" style="left:282px;width:98px;padding-left:2px">MaxZoom: 18</div>
<div class="sp" style="left:382px;width:98px;padding-left:2px">TileSize: 256</div>
<div class="sp" style="left:482px;width:98px;padding-left:2px">EPSG:3857</div>
<div class="sp" style="left:582px;width:1338px;padding-left:2px">Longitude=7.553101, Latitude=47.554287, tile=8/133/89.png</div>
</body></html>
